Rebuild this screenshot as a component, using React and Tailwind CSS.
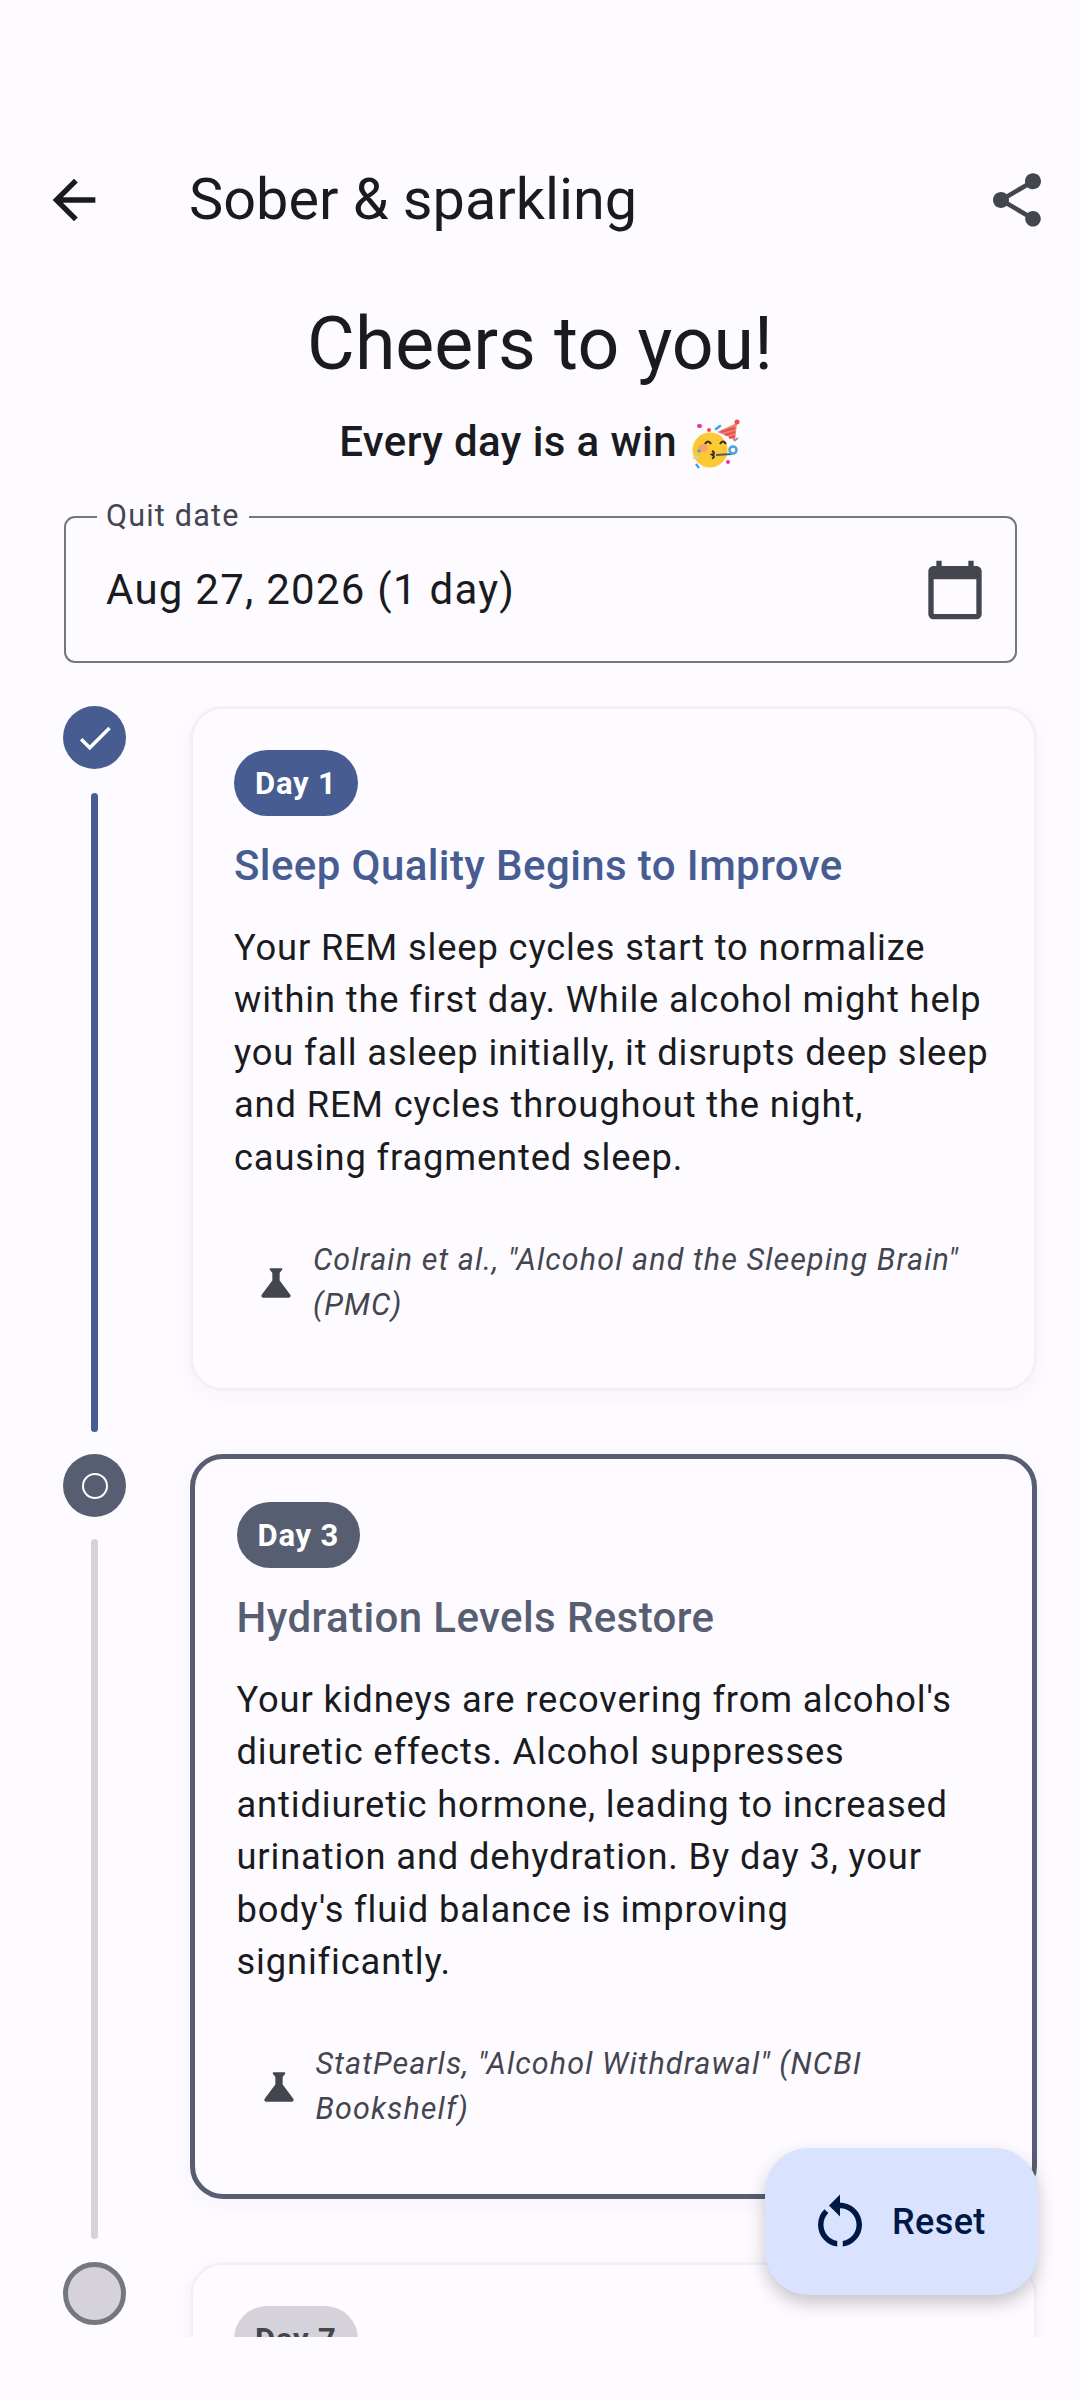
import { MdArrowBack, MdShare, MdCalendarToday, MdRestartAlt, MdScience, MdCheck } from 'react-icons/md';

function PartyFace() {
  return (
    <svg viewBox="0 0 50 52" className="inline-block w-[50px] h-[52px] ml-[3px] align-[-14px]">
      <circle cx="19" cy="32" r="17.5" fill="#fbc934" />
      <path d="M26 14 L46 5 L44 23 C39 19 32 16 26 14Z" fill="#f47d74" />
      <path d="M30 14 L44 10 M34 17 L44 14 M38 20 L44 18" stroke="#e0524d" strokeWidth="2" />
      <circle cx="46" cy="4" r="2.5" fill="#ef4f45" />
      <path d="M14 26 q3 -5 6 0 M29 26 q3 -5 6 0" stroke="#3b2a1a" strokeWidth="2.2" fill="none" />
      <path d="M21 33 q4 2 0 3.5 q4 2 0 4" stroke="#3b2a1a" strokeWidth="2" fill="none" />
      <path d="M25 37 L41 36" stroke="#565c66" strokeWidth="2" />
      <circle cx="42" cy="32" r="3.5" fill="none" stroke="#4da3d9" strokeWidth="2.6" />
      <ellipse cx="12" cy="30" rx="5" ry="4" fill="#f6a26b" />
      <circle cx="8" cy="33" r="1.8" fill="#4da3d9" />
      <rect x="6" y="6" width="5" height="4" rx="2" fill="#ec2fa5" />
      <rect x="16" y="10" width="4" height="4" rx="2" fill="#ef4f45" />
      <path d="M25 11 L29 8" stroke="#35a5ee" strokeWidth="2.6" strokeLinecap="round" />
      <path d="M2 40 L7 39" stroke="#c9d1dc" strokeWidth="2" />
      <path d="M5 46 L8 50" stroke="#35a5ee" strokeWidth="2.2" />
      <circle cx="37" cy="44" r="2" fill="#ec2fa5" />
      <path d="M43 23 L47 20" stroke="#8f939b" strokeWidth="1.6" />
    </svg>
  );
}

function Source({ text }) {
  return (
    <div className="flex items-center mt-[54px] mb-[20px] pl-[20px]">
      <MdScience className="w-[44px] h-[44px] shrink-0 text-[#44464f]" />
      <p className="ml-[15px] text-[30.5px] leading-[44.5px] italic tracking-[1.1px] text-[#44464f]">{text}</p>
    </div>
  );
}

function Card({ day, title, body, source, active }) {
  return (
    <div
      className={`flex-1 min-w-0 rounded-[33px] mb-[63px] shadow-[0_5px_24px_rgba(40,40,60,0.04)] ${
        active ? 'border-[5.5px] border-[#585e72] px-[41.5px] py-[43px]' : 'border-[3px] border-[#f2f0f4] p-[41px]'
      }`}
    >
      <span
        className={`inline-flex items-center h-[66px] pt-[2px] px-[21px] rounded-full text-[31px] font-bold tracking-[0.8px] text-white ${
          active ? 'bg-[#585e72]' : 'bg-[#475d92]'
        }`}
      >
        {day}
      </span>
      <h3
        className={`mt-[20px] text-[42px] leading-[60px] font-medium tracking-[0.4px] ${
          active ? 'text-[#585e72]' : 'text-[#475d92]'
        }`}
      >
        {title}
      </h3>
      <p className="mt-[26px] text-[36.3px] leading-[52.4px] tracking-[0.85px] text-[#1a1b20]">{body}</p>
      <Source text={source} />
    </div>
  );
}

export default function App() {
  return (
    <div className="relative w-[1080px] h-[2400px] overflow-hidden bg-[#fdfbff] text-[#1a1b20] font-['Roboto',sans-serif]">
      {/* Top bar */}
      <div className="flex items-center h-[154px] mt-[123px] pl-[42px] pr-[31px]">
        <MdArrowBack className="w-[64px] h-[64px] text-[#1a1b20] shrink-0" />
        <h1 className="ml-[83px] flex-1 text-[57.6px] leading-[80px]">Sober &amp; sparkling</h1>
        <MdShare className="w-[64px] h-[64px] text-[#44464f] shrink-0" />
      </div>

      <h2 className="mt-[19px] text-center text-[73.4px] leading-[96px]">Cheers to you!</h2>
      <p className="mt-[20px] h-[60px] text-center text-[42px] leading-[60px] font-medium tracking-[0.4px]">
        Every day is a win{' '}
        <PartyFace />
      </p>

      {/* Quit date field */}
      <div className="relative mx-[64px] mt-[44px] w-[953px] h-[147px] border-[2px] border-[#757780] rounded-[11px] flex items-center justify-between pl-[40px] pr-[28px]">
        <span className="absolute left-[31px] -top-[22px] px-[9px] bg-[#fdfbff] text-[30.5px] leading-[40px] tracking-[1.2px] text-[#44464f]">
          Quit date
        </span>
        <span className="text-[42px] tracking-[1.25px]">Aug 27, 2026 (1 day)</span>
        <MdCalendarToday className="w-[64px] h-[64px] text-[#44464f]" />
      </div>

      {/* Timeline */}
      <div className="absolute top-[706px] left-0 right-0 h-[1631px] overflow-hidden pl-[63px] pr-[43px]">
        <div className="flex gap-[64px]">
          <div className="w-[63px] shrink-0 flex flex-col items-center">
            <div className="w-[63px] h-[63px] rounded-full bg-[#475d92] flex items-center justify-center">
              <MdCheck className="w-[42px] h-[42px] text-white" />
            </div>
            <div className="w-[7px] flex-1 mt-[24px] mb-[22px] rounded-full bg-[#475d92]" />
          </div>
          <Card
            day="Day 1"
            title="Sleep Quality Begins to Improve"
            body="Your REM sleep cycles start to normalize within the first day. While alcohol might help you fall asleep initially, it disrupts deep sleep and REM cycles throughout the night, causing fragmented sleep."
            source={'Colrain et al., "Alcohol and the Sleeping Brain" (PMC)'}
          />
        </div>

        <div className="flex gap-[64px]">
          <div className="w-[63px] shrink-0 flex flex-col items-center">
            <div className="w-[63px] h-[63px] rounded-full bg-[#585e72] flex items-center justify-center">
              <div className="w-[26px] h-[26px] rounded-full border-[2px] border-white" />
            </div>
            <div className="w-[7px] flex-1 mt-[22px] mb-[23px] rounded-full bg-[#d5d3d9]" />
          </div>
          <Card
            active
            day="Day 3"
            title="Hydration Levels Restore"
            body="Your kidneys are recovering from alcohol's diuretic effects. Alcohol suppresses antidiuretic hormone, leading to increased urination and dehydration. By day 3, your body's fluid balance is improving significantly."
            source={'StatPearls, "Alcohol Withdrawal" (NCBI Bookshelf)'}
          />
        </div>

        <div className="flex gap-[64px]">
          <div className="w-[63px] shrink-0">
            <div className="w-[63px] h-[63px] rounded-full bg-[#d5d3d9] border-[5px] border-[#757780]" />
          </div>
          <div className="flex-1 min-w-0 h-[300px] rounded-[33px] border-[3px] border-[#f2f0f4] p-[41px] shadow-[0_5px_24px_rgba(40,40,60,0.04)]">
            <span className="inline-flex items-center h-[66px] pt-[2px] px-[21px] rounded-full bg-[#d5d3d9] text-[31px] font-bold tracking-[0.8px] text-[#44464f]">
              Day 7
            </span>
          </div>
        </div>
      </div>

      {/* Reset button */}
      <button className="absolute left-[765px] top-[2148px] w-[273px] h-[147px] rounded-[44px] bg-[#d9e2ff] flex items-center pl-[42px] gap-[19px] text-[#001944] shadow-[0_8px_18px_rgba(0,0,0,0.22)]">
        <MdRestartAlt className="w-[66px] h-[66px] shrink-0" />
        <span className="text-[36px] font-medium tracking-[0.4px]">Reset</span>
      </button>
    </div>
  );
}
